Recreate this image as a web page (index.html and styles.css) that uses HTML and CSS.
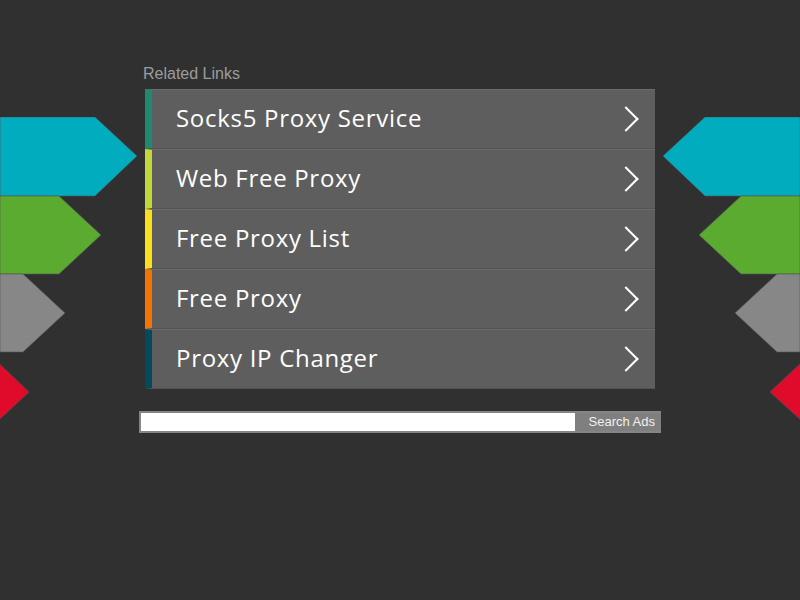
FILE: index.html
```html
<!DOCTYPE html>
<html lang="en">
<head>
    <meta charset="UTF-8">
    <meta name="viewport" content="width=device-width, initial-scale=1.0">
    <title>Related Links</title>
    <link rel="stylesheet" href="styles.css">
</head>
<body>
    <div class="page">
        <div class="side side-left">
            <svg width="139" height="320" viewBox="0 0 139 320">
                <polygon points="0,0 95,0 137,39 95,79 0,79" fill="#00acbe" stroke="#555" stroke-width="0.6"/>
                <polygon points="0,79 59,79 101,118 59,157 0,157" fill="#5bab30" stroke="#555" stroke-width="0.6"/>
                <polygon points="0,157 23,157 65,196 23,235 0,235" fill="#878787" stroke="#555" stroke-width="0.6"/>
                <polygon points="-13,235 -13,235 29,275 -13,314" fill="#e00b2b" stroke="#555" stroke-width="0.6"/>
            </svg>
        </div>

        <div class="main">
            <div class="links-title">Related Links</div>
            <ul class="links">
                <li class="link c1"><span>Socks5 Proxy Service</span><i class="chev"></i></li>
                <li class="link c2"><span>Web Free Proxy</span><i class="chev"></i></li>
                <li class="link c3"><span>Free Proxy List</span><i class="chev"></i></li>
                <li class="link c4"><span>Free Proxy</span><i class="chev"></i></li>
                <li class="link c5"><span>Proxy IP Changer</span><i class="chev"></i></li>
            </ul>
            <form class="search">
                <input type="text" class="search-input">
                <button type="submit" class="search-btn">Search Ads</button>
            </form>
        </div>

        <div class="side side-right">
            <svg width="139" height="320" viewBox="0 0 139 320">
                <polygon points="139,0 44,0 2,39 44,79 139,79" fill="#00acbe" stroke="#555" stroke-width="0.6"/>
                <polygon points="139,79 80,79 38,118 80,157 139,157" fill="#5bab30" stroke="#555" stroke-width="0.6"/>
                <polygon points="139,157 116,157 74,196 116,235 139,235" fill="#878787" stroke="#555" stroke-width="0.6"/>
                <polygon points="152,235 152,235 109,275 152,314" fill="#e00b2b" stroke="#555" stroke-width="0.6"/>
            </svg>
        </div>
    </div>
</body>
</html>
```
FILE: styles.css
```css
body {
    margin: 0;
    background-color: #303030;
    font-family: "Liberation Sans", Arial, sans-serif;
    height: 100vh;
    overflow: hidden;
}

.page {
    display: grid;
    grid-template-columns: 139px 522px 139px;
}

.side {
    padding-top: 117px;
}

.side svg {
    display: block;
}

.main {
    padding-top: 65px;
}

.links-title {
    color: #9c9c9c;
    font-size: 16px;
    line-height: 18px;
    padding-left: 4px;
    margin-bottom: 6px;
}

.links {
    list-style: none;
    margin: 0 6px 0 6px;
    padding: 0;
}

.link {
    display: flex;
    align-items: center;
    justify-content: space-between;
    height: 58px;
    background-color: #5e5e5e;
    border-top: 1px solid #6b6b6b;
    border-bottom: 1px solid #535353;
    border-left: 7px solid #1e8a6e;
    padding: 0 18px 0 24px;
    color: #fff;
    font-family: "Open Sans", sans-serif;
    font-size: 24px;
    letter-spacing: 0.7px;
}

.link span {
    margin-top: -3px;
}

.c1 { border-left-color: #1e8a6e; }
.c2 { border-left-color: #c0d83a; }
.c3 { border-left-color: #f9e01b; }
.c4 { border-left-color: #f57300; }
.c5 { border-left-color: #034a5a; }

.chev {
    width: 16px;
    height: 16px;
    border-top: 2px solid #fff;
    border-right: 2px solid #fff;
    transform: rotate(45deg);
    margin-right: 2px;
}

.search {
    display: flex;
    margin-top: 22px;
    background-color: #858585;
    padding: 2px 0 2px 2px;
    height: 18px;
}

.search-input {
    flex: 1;
    border: none;
    margin: 0;
    padding: 0;
    background-color: #fff;
    height: 18px;
}

.search-btn {
    border: none;
    background-color: #7f7f7f;
    color: #f0f0f0;
    font-family: "Liberation Sans", Arial, sans-serif;
    font-size: 13px;
    padding: 0 6px 0 14px;
    height: 18px;
    line-height: 18px;
}
```
